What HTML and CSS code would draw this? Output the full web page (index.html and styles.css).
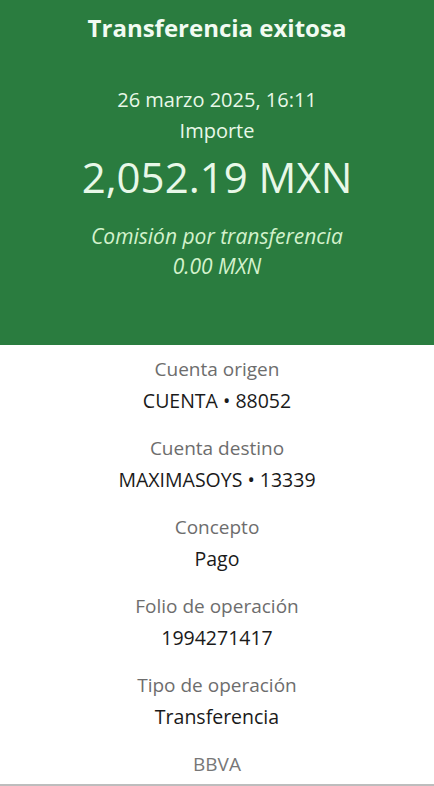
FILE: index.html
```html
<!DOCTYPE html>
<html>
<head>
    <title>Transferencia exitosa</title>
    <link rel="stylesheet" href="styles.css">
</head>
<body>
    <div class="header">
        <h1>Transferencia exitosa</h1>
        <p class="date">26 marzo 2025, 16:11</p>
        <p class="label-light">Importe</p>
        <p class="amount">2,052.19 MXN</p>
        <p class="fee">Comisión por transferencia</p>
        <p class="fee">0.00 MXN</p>
    </div>
    <div class="details">
        <div class="item">
            <p class="label">Cuenta origen</p>
            <p class="value">CUENTA • 88052</p>
        </div>
        <div class="item">
            <p class="label">Cuenta destino</p>
            <p class="value">MAXIMASOYS • 13339</p>
        </div>
        <div class="item">
            <p class="label">Concepto</p>
            <p class="value">Pago</p>
        </div>
        <div class="item">
            <p class="label">Folio de operación</p>
            <p class="value">1994271417</p>
        </div>
        <div class="item">
            <p class="label">Tipo de operación</p>
            <p class="value">Transferencia</p>
        </div>
        <p class="bank">BBVA</p>
    </div>
</body>
</html>
```

FILE: styles.css
```css
body {
    margin: 0;
    font-family: 'Open Sans', 'Liberation Sans', sans-serif;
    background-color: #fff;
    text-align: center;
    width: 434px;
    height: 786px;
    overflow: hidden;
    border-bottom: 2px solid #bdbdbd;
    box-sizing: border-box;
}
p {
    margin: 0;
}
.header {
    background-color: #2a7c3f;
    color: #e8f8e8;
    height: 345px;
    padding-top: 12px;
    box-sizing: border-box;
}
h1 {
    margin: 0;
    font-size: 24px;
    font-weight: 700;
    line-height: 32px;
    color: #f2fbf2;
}
.date {
    margin-top: 41px;
    font-size: 20px;
    line-height: 30px;
}
.label-light {
    font-size: 20px;
    line-height: 32px;
}
.amount {
    font-size: 42px;
    line-height: 56px;
    margin-top: 2px;
}
.fee {
    font-style: italic;
    font-size: 21px;
    line-height: 30px;
    color: #d3f2cc;
}
.amount + .fee {
    margin-top: 16px;
}
.details {
    padding-top: 8px;
}
.item {
    margin-bottom: 15px;
}
.label {
    font-size: 19px;
    line-height: 32px;
    color: #6d6d6d;
}
.value {
    font-size: 19.5px;
    line-height: 32px;
    color: #1a1a1a;
}
.bank {
    font-size: 19px;
    line-height: 32px;
    color: #777;
}
```
